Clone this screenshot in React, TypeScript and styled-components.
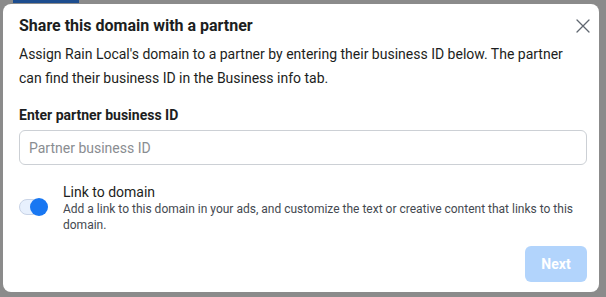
import React from "react";
import styled, { createGlobalStyle } from "styled-components";

const Global = createGlobalStyle`
  html, body { margin: 0; padding: 0; }
  body {
    background: #8b8b8b;
    font-family: Roboto, "Liberation Sans", Arial, sans-serif;
    width: 606px;
    height: 297px;
    overflow: hidden;
  }
`;

const Page = styled.div`
  display: flex;
  flex-direction: column;
  width: 606px;
  height: 297px;
`;

const TopStrip = styled.div`
  height: 4px;
  display: flex;
`;

const Tab = styled.div`
  margin-left: 13px;
  width: 66px;
  height: 3px;
  background: #1d4d8f;
`;

const Modal = styled.div`
  margin-left: 3px;
  width: 596px;
  height: 288px;
  background: #fff;
  border-radius: 8px;
  box-sizing: border-box;
  padding: 11px 12px 10px 16px;
  display: flex;
  flex-direction: column;
`;

const Header = styled.div`
  display: flex;
  align-items: center;
  justify-content: space-between;
  height: 22px;
`;

const Title = styled.h2`
  margin: 0;
  font-size: 16px;
  font-weight: 700;
  color: #1c1e21;
  line-height: 22px;
`;

const Close = styled.button`
  border: none;
  background: none;
  padding: 0;
  width: 14px;
  height: 14px;
  display: flex;
  align-items: center;
  justify-content: center;
  margin-right: -3px;
  cursor: pointer;
`;

const Desc = styled.p`
  margin: 5px 0 0;
  font-size: 14px;
  line-height: 24px;
  color: #1c1e21;
  padding-right: 10px;
`;

const Label = styled.label`
  margin-top: 16px;
  font-size: 14px;
  font-weight: 700;
  color: #1c1e21;
  line-height: 18px;
`;

const Input = styled.input`
  margin-top: 6px;
  height: 35px;
  width: 568px;
  box-sizing: border-box;
  border: 1px solid #ccd0d5;
  border-radius: 6px;
  padding: 0 9px;
  font-family: inherit;
  font-size: 14px;
  color: #1c1e21;
  outline: none;
  &::placeholder { color: #8a8d91; }
`;

const ToggleRow = styled.div`
  margin-top: 18px;
  display: flex;
  align-items: flex-start;
  gap: 16px;
`;

const Track = styled.div<{ $on: boolean }>`
  margin-top: 16px;
  width: 28px;
  height: 16px;
  box-sizing: border-box;
  border-radius: 8px;
  border: 1px solid #c8d3e6;
  background: ${(p) => (p.$on ? "#e7f0fd" : "#f0f2f5")};
  display: flex;
  align-items: center;
  justify-content: ${(p) => (p.$on ? "flex-end" : "flex-start")};
  flex-shrink: 0;
`;

const Knob = styled.div`
  width: 18px;
  height: 18px;
  flex-shrink: 0;
  border-radius: 50%;
  background: #1877f2;
  margin-right: -2px;
`;

const ToggleText = styled.div`
  display: flex;
  flex-direction: column;
`;

const ToggleTitle = styled.div`
  font-size: 14px;
  line-height: 18px;
  color: #1c1e21;
`;

const ToggleDesc = styled.div`
  font-size: 12px;
  line-height: 16px;
  color: #444950;
  padding-right: 10px;
`;

const Footer = styled.div`
  margin-top: auto;
  display: flex;
  justify-content: flex-end;
`;

const Button = styled.button`
  width: 62px;
  height: 36px;
  border: none;
  border-radius: 6px;
  background: #b2d4fc;
  color: #fff;
  font-family: inherit;
  font-size: 14px;
  font-weight: 700;
  cursor: not-allowed;
`;

export default function App() {
  return (
    <Page>
      <Global />
      <TopStrip>
        <Tab />
      </TopStrip>
      <Modal>
        <Header>
          <Title>Share this domain with a partner</Title>
          <Close aria-label="Close">
            <svg width="14" height="14" viewBox="0 0 14 14">
              <path d="M1 1L13 13M13 1L1 13" stroke="#606770" strokeWidth="1.3" strokeLinecap="round" />
            </svg>
          </Close>
        </Header>
        <Desc>
          Assign Rain Local's domain to a partner by entering their business ID below. The partner can find their business ID in the Business info tab.
        </Desc>
        <Label>Enter partner business ID</Label>
        <Input placeholder="Partner business ID" />
        <ToggleRow>
          <Track $on={true}>
            <Knob />
          </Track>
          <ToggleText>
            <ToggleTitle>Link to domain</ToggleTitle>
            <ToggleDesc>
              Add a link to this domain in your ads, and customize the text or creative content that links to this domain.
            </ToggleDesc>
          </ToggleText>
        </ToggleRow>
        <Footer>
          <Button disabled>Next</Button>
        </Footer>
      </Modal>
    </Page>
  );
}
